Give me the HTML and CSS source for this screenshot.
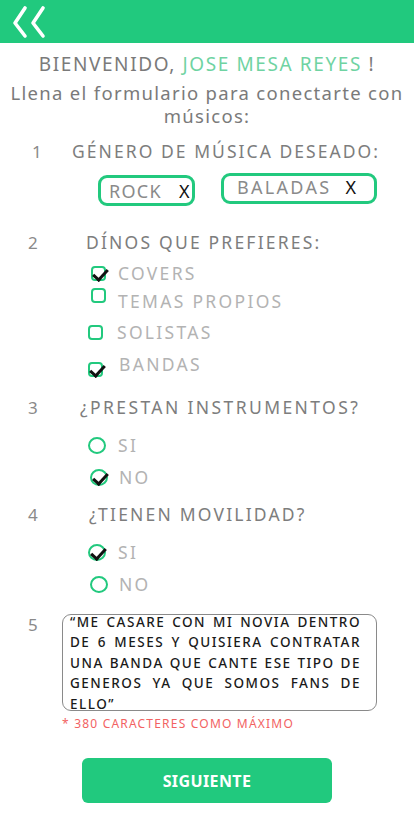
FILE: index.html
```html
<!DOCTYPE html>
<html lang="es">
<head>
<meta charset="utf-8">
<title>Formulario</title>
<link rel="stylesheet" href="styles.css">
</head>
<body>
<header class="topbar">
  <svg class="back" width="48" height="43" viewBox="0 0 48 43" aria-label="Volver">
    <path d="M25 8 L15 23 L25 36 M43 8 L33 23 L43 36" fill="none" stroke="#fff" stroke-width="3.6" stroke-linecap="round" stroke-linejoin="round"/>
  </svg>
</header>
<main class="form">
  <h1 class="welcome">BIENVENIDO, <span class="name">JOSE MESA REYES</span> !</h1>
  <p class="intro">Llena el formulario para conectarte con<br>músicos:</p>

  <section class="q q1">
    <div class="q-head"><span class="num">1</span><h2 class="q-title">GÉNERO DE MÚSICA DESEADO:</h2></div>
    <div class="chips">
      <span class="chip chip-rock">ROCK <b class="chip-x">X</b></span>
      <span class="chip chip-baladas">BALADAS <b class="chip-x">X</b></span>
    </div>
  </section>

  <section class="q q2">
    <div class="q-head"><span class="num">2</span><h2 class="q-title">DÍNOS QUE PREFIERES:</h2></div>
    <ul class="opts checks">
      <li class="opt"><span class="box on"></span><span class="opt-label">COVERS</span></li>
      <li class="opt"><span class="box"></span><span class="opt-label">TEMAS PROPIOS</span></li>
      <li class="opt"><span class="box"></span><span class="opt-label">SOLISTAS</span></li>
      <li class="opt"><span class="box on"></span><span class="opt-label">BANDAS</span></li>
    </ul>
  </section>

  <section class="q q3">
    <div class="q-head"><span class="num">3</span><h2 class="q-title">¿PRESTAN INSTRUMENTOS?</h2></div>
    <ul class="opts radios">
      <li class="opt"><span class="radio"></span><span class="opt-label">SI</span></li>
      <li class="opt"><span class="radio on"></span><span class="opt-label">NO</span></li>
    </ul>
  </section>

  <section class="q q4">
    <div class="q-head"><span class="num">4</span><h2 class="q-title">¿TIENEN MOVILIDAD?</h2></div>
    <ul class="opts radios">
      <li class="opt"><span class="radio on"></span><span class="opt-label">SI</span></li>
      <li class="opt"><span class="radio"></span><span class="opt-label">NO</span></li>
    </ul>
  </section>

  <section class="q q5">
    <div class="q-row">
      <span class="num">5</span>
      <div class="answer">
        <div class="answer-box">
          <span class="ln">“ME CASARE CON MI NOVIA DENTRO</span>
          <span class="ln">DE 6 MESES Y QUISIERA CONTRATAR</span>
          <span class="ln">UNA BANDA QUE CANTE ESE TIPO DE</span>
          <span class="ln">GENEROS YA QUE SOMOS FANS DE</span>
          <span class="ln last">ELLO”</span>
        </div>
        <p class="note">* 380 CARACTERES COMO MÁXIMO</p>
      </div>
    </div>
  </section>

  <div class="actions"><button class="next" type="button">SIGUIENTE</button></div>
</main>
</body>
</html>
```

FILE: styles.css
```css
* { box-sizing: border-box; }
html, body { margin: 0; padding: 0; background: #fff; }
body { width: 414px; height: 830px; overflow: hidden; font-family: "Noto Sans", "Open Sans", sans-serif; color: #7a7a7a; }

.topbar { height: 43px; background: #21c97e; display: flex; align-items: flex-start; }
.back { display: block; margin-left: 0; }

.form { display: flex; flex-direction: column; }

.welcome { margin: 9px 0 0; font-size: 19px; line-height: 24px; font-weight: 400; text-align: center; letter-spacing: 1.6px; color: #7a7a7a; }
.name { color: #6fd3a2; }
.intro { margin: 5px 0 0; font-size: 18.5px; line-height: 23px; text-align: center; color: #7a7a7a; letter-spacing: 1.3px; }

.q-head { display: flex; align-items: baseline; padding-left: 28px; }
.num { width: 40px; font-size: 17px; line-height: 20px; color: #8a8a8a; flex: 0 0 auto; }
.q-title { margin: 0; font-size: 17.5px; line-height: 20px; font-weight: 400; letter-spacing: 2.2px; color: #7d7d7d; }

.q1 .q-head { margin-top: 14px; }
.q1 .num { padding-left: 4px; }
.q1 .q-title { margin-left: 4px; letter-spacing: 2.05px; }
.q2 .q-head { margin-top: 26px; }
.q2 .q-title { margin-left: 18px; }
.q3 .q-head { margin-top: 18px; }
.q3 .q-title { margin-left: 12px; letter-spacing: 2.4px; }
.q4 .q-head { margin-top: 15px; }
.q4 .q-title { margin-left: 21px; }

.chips { display: flex; align-items: flex-start; gap: 26px; padding-left: 98px; margin-top: 11px; }
.chip { display: flex; align-items: center; height: 31px; border: 3px solid #22c97e; border-radius: 9px; font-size: 18px; letter-spacing: 1.3px; color: #8a8a8a; padding-left: 8px; }
.chip-rock { width: 97px; margin-top: 2px; }
.chip-baladas { width: 156px; padding-left: 13px; padding-bottom: 3px; letter-spacing: 2.3px; }
.chip-x { font-weight: 400; color: #111; margin-left: 17px; letter-spacing: 0; }
.chip-baladas .chip-x { margin-left: 14px; }

.opts { list-style: none; margin: 0; padding: 0 0 0 88px; }
.opt { display: flex; align-items: center; height: 24px; }
.opt-label { font-size: 17.5px; letter-spacing: 2.3px; color: #b3b3b3; }

.checks { margin-top: 8px; }
.checks .opt:nth-child(2) { margin-top: 2px; }
.checks .opt:nth-child(3) { margin-top: 9px; }
.checks .opt:nth-child(4) { margin-top: 11px; }
.box { position: relative; width: 15px; height: 15px; border: 2px solid #22c97e; border-radius: 4px; margin-right: 14px; flex: 0 0 auto; }
.checks .opt:nth-child(-n+2) .box { margin-left: 3px; margin-right: 12px; }
.checks .opt:nth-child(2) .box { margin-top: -8px; }
.checks .opt:nth-child(2) .opt-label { margin-top: 4px; }
.checks .opt:nth-child(4) .opt-label { margin-top: -7px; margin-left: 2px; }
.checks .opt:nth-child(4) .box { margin-top: 4px; }

.radios { margin-top: 15px; }
.radios .opt + .opt { margin-top: 8px; }
.radio { position: relative; width: 18px; height: 17px; border: 2px solid #22c97e; border-radius: 50%; margin-right: 12px; flex: 0 0 auto; }
.radios .opt:nth-child(2) .radio { margin-left: 2px; margin-right: 11px; }

.box.on::after, .radio.on::after {
  content: ""; position: absolute; left: 0; top: 1px; width: 12px; height: 6px;
  border-left: 3.6px solid #111; border-bottom: 3.6px solid #111;
  transform: rotate(-48deg);
}
.radio.on::after { left: 1px; top: 2px; }

.q-row { display: flex; align-items: flex-start; padding-left: 28px; margin-top: 18px; }
.q5 .num { width: 34px; margin-top: 1px; }
.answer { display: flex; flex-direction: column; }
.answer-box { width: 315px; height: 97px; border: 1px solid #8a8a8a; border-radius: 9px; padding: 0 15px 0 7px; font-size: 13.5px; line-height: 20.4px; color: #1a1a1a; letter-spacing: 1.5px; font-weight: 500; }
.ln { display: block; text-align: justify; text-align-last: justify; }
.ln:first-child { margin-top: -3px; }
.ln.last { text-align-last: left; }
.note { margin: 5px 0 0; font-size: 12px; line-height: 16px; color: #f26262; letter-spacing: 1.2px; }

.actions { display: flex; padding-left: 82px; margin-top: 26px; }
.next { width: 250px; height: 45px; border: 0; border-radius: 6px; background: #21c97e; color: #fff; font-family: "Noto Sans", sans-serif; font-size: 16px; font-weight: 700; letter-spacing: 0.4px; }
```
